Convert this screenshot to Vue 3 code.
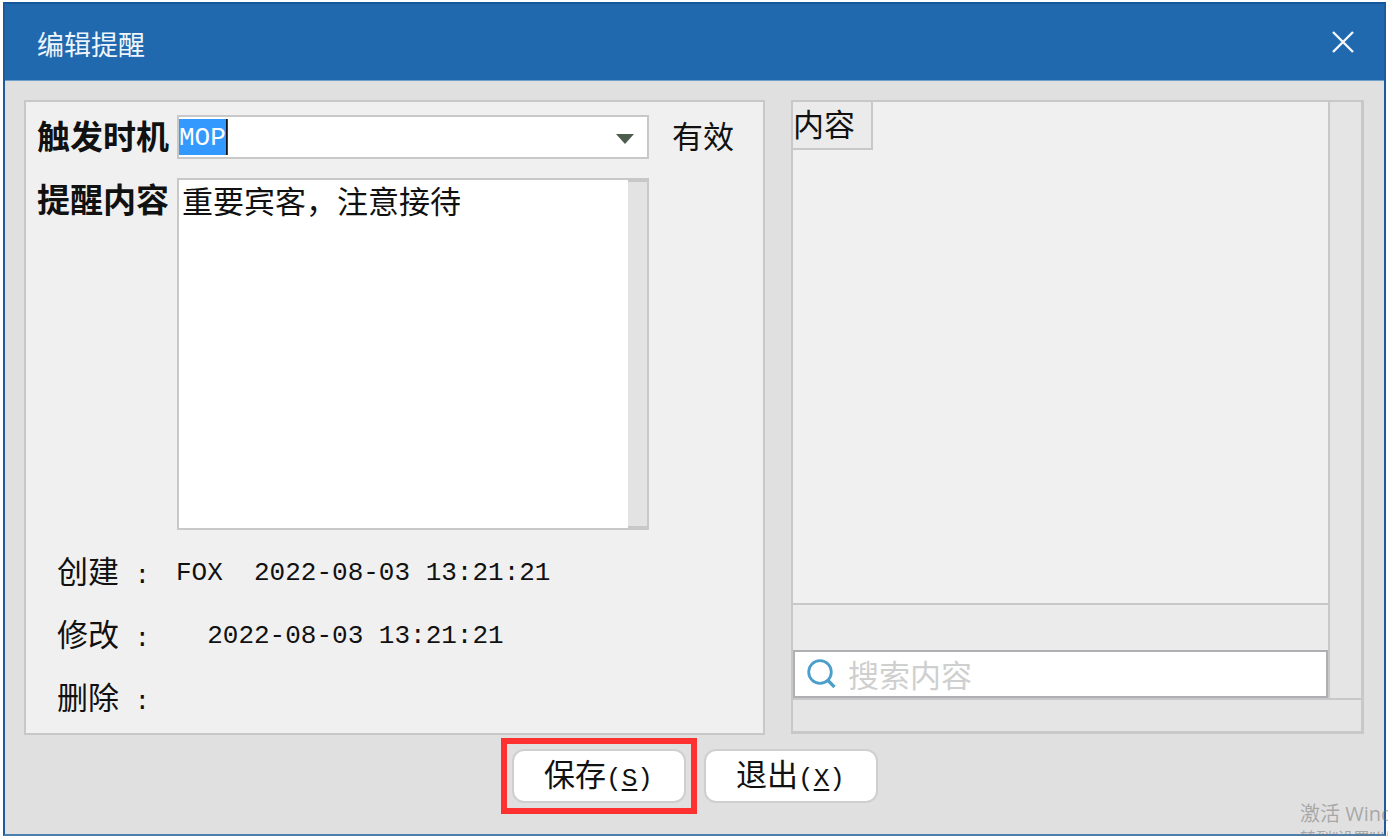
<script setup>
import { ref } from 'vue'

const trigger = ref('MOP')
const content = ref('重要宾客，注意接待')
const keyword = ref('')
const records = [
  { label: '创建', value: 'FOX  2022-08-03 13:21:21' },
  { label: '修改', value: '  2022-08-03 13:21:21' },
  { label: '删除', value: '' },
]
</script>

<template>
  <div class="screen">
    <section class="window" role="dialog" aria-labelledby="title">
      <header class="titlebar">
        <h1 id="title">编辑提醒</h1>
        <button class="close" type="button" aria-label="关闭">
          <svg viewBox="0 0 22 22" width="22" height="22">
            <path d="M1 1L21 21M21 1L1 21" fill="none" stroke="#f4f8fc" stroke-width="2.4" />
          </svg>
        </button>
      </header>

      <main class="body">
        <form class="panel form" @submit.prevent>
          <div class="fields">
            <label class="name" for="trigger">触发时机</label>
            <div class="combo">
              <input id="trigger" v-model="trigger" type="text" autocomplete="off" />
              <button type="button" aria-label="展开">
                <svg viewBox="0 0 18 10" width="18" height="10">
                  <path d="M0 0H18L9 10Z" fill="#4d5c4d" />
                </svg>
              </button>
            </div>
            <span class="state">有效</span>

            <label class="name" for="content">提醒内容</label>
            <div class="memo">
              <textarea id="content" v-model="content" spellcheck="false"></textarea>
              <div class="track"></div>
            </div>
          </div>

          <dl class="records">
            <div v-for="r in records" :key="r.label">
              <dt>{{ r.label }}<span class="mono"> :</span></dt>
              <dd class="mono">{{ r.value }}</dd>
            </div>
          </dl>
        </form>

        <section class="panel list">
          <div class="rows">
            <table>
              <thead>
                <tr><th scope="col">内容</th></tr>
              </thead>
            </table>
          </div>
          <div class="summary"></div>
          <label class="search">
            <svg viewBox="0 0 30 30" width="30" height="30" aria-hidden="true">
              <circle cx="13" cy="13" r="11.3" fill="none" stroke="#4c9fca" stroke-width="2.8" />
              <path d="M20.5 21L27.5 28" stroke="#4c9fca" stroke-width="3.2" />
            </svg>
            <input v-model="keyword" type="text" placeholder="搜索内容" aria-label="搜索内容" />
          </label>
          <div class="vtrack"></div>
          <div class="htrack"></div>
        </section>
      </main>

      <footer class="actions">
        <button class="marked" type="button" accesskey="s">保存<span class="mono">(<u>S</u>)</span></button>
        <button type="button" accesskey="x">退出<span class="mono">(<u>X</u>)</span></button>
      </footer>
    </section>

    <div class="watermark">
      <p class="big">激活 Windows</p>
      <p>转到“设置”以激活 Windows。</p>
    </div>
  </div>
</template>

<style>
body {
  margin: 0;
  background: #fff;
}
</style>

<style scoped>
* {
  box-sizing: border-box;
}

.screen {
  position: relative;
  display: flex;
  height: 100vh;
  min-height: 600px;
  padding: 2px 2px 0 3px;
  overflow: hidden;
  font-family: "Noto Sans CJK SC", sans-serif;
  font-size: 31px;
  font-weight: 400;
  line-height: 40px;
  color: #111;
}

button,
input,
textarea {
  margin: 0;
  padding: 0;
  border: 0;
  outline: 0;
  background: none;
  font: inherit;
  color: inherit;
}

.mono {
  font-family: "Liberation Mono", monospace;
  font-size: 26px;
  white-space: pre;
}

.window {
  flex: 1;
  min-width: 0;
  display: flex;
  flex-direction: column;
  border: 2px solid #1c5c9c;
  border-top-color: #14579a;
  border-bottom-color: #4b7fae;
  background: #e0e0e0;
}

.titlebar {
  display: flex;
  align-items: center;
  justify-content: space-between;
  height: 77px;
  padding: 0 30px 0 32px;
  border-bottom: 1px solid #6f9fcb;
  background: #2169af;
}

.titlebar h1 {
  margin: 3px 0 0;
  font-size: 27px;
  font-weight: 400;
  color: #eef5fc;
}

.close,
.close svg {
  display: block;
}

.body {
  flex: 1;
  min-height: 0;
  display: grid;
  grid-template-columns: 741fr 573fr;
  gap: 26px;
  padding: 19px 20px 0 19px;
}

.panel {
  min-width: 0;
  border: 2px solid #c8c8c8;
  background: #f0f0f0;
}

.form {
  display: flex;
  flex-direction: column;
  padding-top: 13px;
}

.fields {
  flex: 1;
  display: grid;
  grid-template-columns: 151px 1fr 114px;
  grid-template-rows: 44px 1fr;
  row-gap: 19px;
}

.name {
  padding-left: 11px;
  font-size: 33px;
  font-weight: 700;
  white-space: nowrap;
}

.state {
  padding-left: 23px;
}

.combo,
.memo {
  display: flex;
  border: 2px solid #c8c8c8;
  background: #fff;
}

.combo input {
  flex: 1;
  min-width: 0;
  padding-top: 2px;
  font-family: "Liberation Mono", monospace;
  font-size: 26px;
  color: #fff;
  background:
    linear-gradient(90deg, #3399ff calc(100% - 2px), #111 calc(100% - 2px)) 0 center / calc(3ch + 2px) 36px no-repeat;
}

.combo button {
  display: flex;
  align-items: center;
  justify-content: center;
  width: 44px;
  padding-top: 4px;
}

.memo textarea {
  flex: 1;
  min-width: 0;
  padding: 0 3px;
  resize: none;
  overflow: hidden;
}

.track {
  width: 19px;
  border: solid #c8c8c8;
  border-width: 2px 0;
  background: #e3e3e3;
}

.records {
  margin: 11px 0 3px;
  padding-left: 31px;
}

.records div {
  display: flex;
  align-items: center;
  height: 63px;
}

.records dt {
  width: 119px;
}

.records dd {
  margin: 0;
}

.list {
  display: grid;
  grid-template-columns: 1fr 33px;
  grid-template-rows: 1fr 47px 48px 33px;
  margin-bottom: 1px;
  border-right-width: 3px;
  border-bottom-width: 3px;
}

.list table {
  border-collapse: collapse;
}

.list th {
  width: 79px;
  height: 47px;
  padding: 0 0 5px;
  border: solid #c8c8c8;
  border-width: 0 2px 2px 0;
  background: #ebebeb;
  font-weight: 400;
  text-align: left;
}

.summary {
  border-top: 2px solid #c8c8c8;
  background: #ebebeb;
}

.search {
  display: flex;
  align-items: center;
  gap: 11px;
  padding: 0 12px;
  border: 2px solid #afafb4;
  background: #fff;
}

.search input {
  flex: 1;
  min-width: 0;
  height: 40px;
}

.search input::placeholder {
  color: #cfcfcf;
  opacity: 1;
}

.vtrack {
  grid-column: 2;
  grid-row: 1 / 4;
  border-left: 2px solid #c8c8c8;
  background: #e5e5e5;
}

.htrack {
  grid-column: 1 / 3;
  border-top: 2px solid #c8c8c8;
  background: #e5e5e5;
}

.actions {
  display: flex;
  justify-content: center;
  gap: 18px;
  padding: 14px 0 31px;
}

.actions button {
  position: relative;
  width: 174px;
  height: 54px;
  border: 2px solid #cfcfcf;
  border-radius: 12px;
  background: #fff;
}

.actions u {
  text-decoration-thickness: 2px;
  text-underline-offset: 3px;
}

.marked::after {
  content: "";
  position: absolute;
  inset: -13px;
  border: 6px solid #fe3030;
  pointer-events: none;
}

.watermark {
  position: absolute;
  left: 1300px;
  top: 800px;
  font-family: "Open Sans", "Noto Sans CJK SC", sans-serif;
  font-size: 16px;
  line-height: 20px;
  color: rgba(110, 110, 110, 0.5);
  white-space: nowrap;
  pointer-events: none;
}

.watermark p {
  margin: 0;
}

.watermark .big {
  font-size: 20px;
  line-height: 28px;
}
</style>
